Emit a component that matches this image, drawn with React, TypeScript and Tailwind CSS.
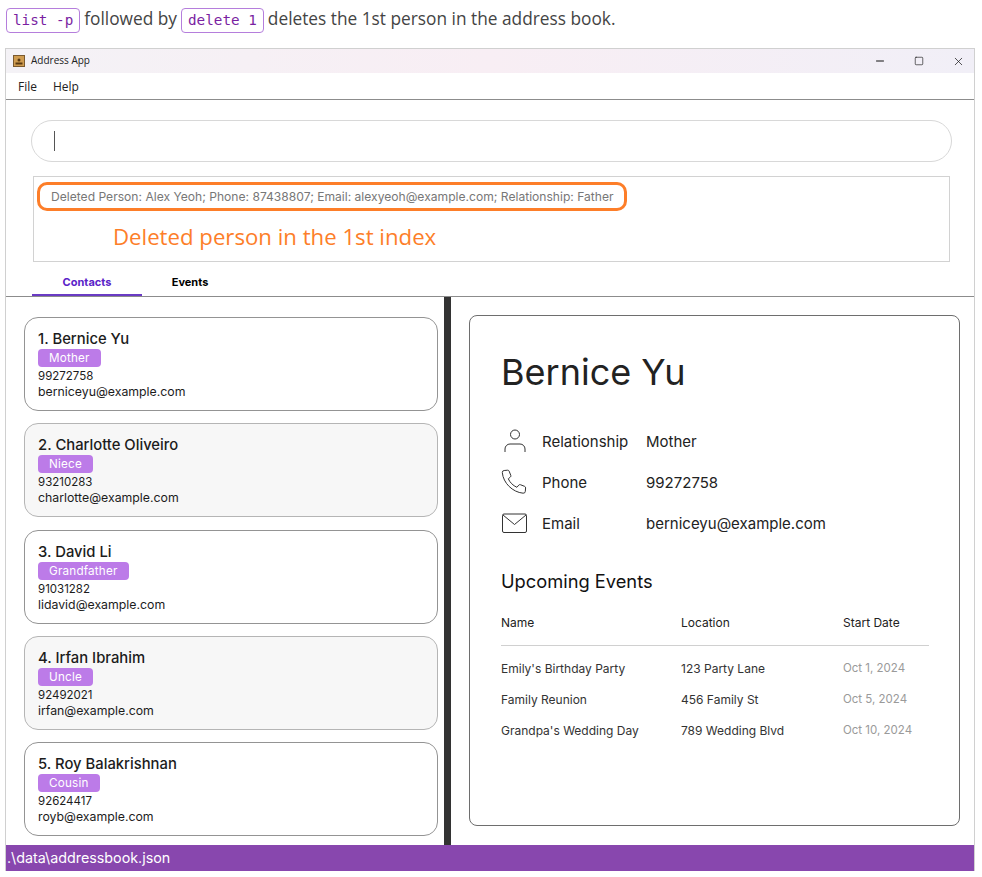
import React from 'react'
import { Minus, Square, X } from 'lucide-react'

const sans = 'font-["Inter",sans-serif]'

const people = [
  { id: 1, name: 'Bernice Yu', tag: 'Mother', phone: '99272758', email: 'berniceyu@example.com' },
  { id: 2, name: 'Charlotte Oliveiro', tag: 'Niece', phone: '93210283', email: 'charlotte@example.com' },
  { id: 3, name: 'David Li', tag: 'Grandfather', phone: '91031282', email: 'lidavid@example.com' },
  { id: 4, name: 'Irfan Ibrahim', tag: 'Uncle', phone: '92492021', email: 'irfan@example.com' },
  { id: 5, name: 'Roy Balakrishnan', tag: 'Cousin', phone: '92624417', email: 'royb@example.com' },
]

const events = [
  { name: "Emily's Birthday Party", place: '123 Party Lane', date: 'Oct 1, 2024' },
  { name: 'Family Reunion', place: '456 Family St', date: 'Oct 5, 2024' },
  { name: "Grandpa's Wedding Day", place: '789 Wedding Blvd', date: 'Oct 10, 2024' },
]

function Code({ children }: { children: React.ReactNode }) {
  return (
    <code className='h-[25px] px-[6px] rounded-[4px] border border-[#b57edc] text-[#7a1fa2] font-["DejaVu_Sans_Mono",monospace] text-[14.300px] leading-[23px]'>
      {children}
    </code>
  )
}

function PersonCard({ p }: { p: (typeof people)[number] }) {
  const even = p.id % 2 === 0
  return (
    <div
      className={`h-[94px] shrink-0 rounded-[14px] border pl-[13px] pt-[12px] ${
        even ? 'bg-[#f7f7f7] border-[#b5b5b5]' : 'bg-white border-[#949494]'
      }`}
    >
      <div className="text-[14.800px] leading-[18px] font-medium text-[#1c1c1c]">
        {p.id}. {p.name}
      </div>
      <div className="mt-[1px] flex">
        <span className="h-[18px] px-[11px] rounded-[4px] bg-[#bc7be8] text-white text-[11.700px] leading-[18px] tracking-[0.2px]">
          {p.tag}
        </span>
      </div>
      <div className="mt-[1px] text-[11.500px] leading-[17px] text-[#1c1c1c]">{p.phone}</div>
      <div className="-mt-[1px] text-[12.300px] leading-[16px] text-[#1c1c1c]">{p.email}</div>
    </div>
  )
}

function PersonIcon() {
  return (
    <svg width="26" height="26" viewBox="0 0 26 26" fill="none" stroke="#333" strokeWidth="1">
      <circle cx="14" cy="6.500" r="4.500" />
      <path d="M4 24v-3a5 5 0 0 1 5-5h10a5 5 0 0 1 5 5v3" />
    </svg>
  )
}

function PhoneIcon() {
  return (
    <svg width="26" height="26" viewBox="0 0 26 26" fill="none" stroke="#333" strokeWidth="1">
      <path d="M3.200 1.500 6.600 1.200a1.500 1.500 0 0 1 1.500.9l1.700 4.300a1.500 1.500 0 0 1-.4 1.600L7.300 9.800c1.600 3.600 4.600 6.700 8.600 8.500l1.900-2.200a1.500 1.500 0 0 1 1.600-.4l4.300 1.700a1.500 1.500 0 0 1 .9 1.500l-.3 3.500a2 2 0 0 1-2.200 1.800C11.600 23.200 2.200 14 1.300 3.600a2 2 0 0 1 1.900-2.100Z" />
    </svg>
  )
}

function MailIcon() {
  return (
    <svg width="26" height="20" viewBox="0 0 26 20" fill="none" stroke="#333" strokeWidth="1">
      <rect x="1.500" y="1" width="24" height="18.500" rx="1.500" />
      <path d="m2 2 11.500 9.500L25 2" />
    </svg>
  )
}

export default function App() {
  return (
    <div className={`${sans} w-[982px] h-[877px] bg-white overflow-hidden flex flex-col`}>
      <div className='h-[48px] pl-[6px] pt-[8px] flex items-start gap-[4px] font-["Open_Sans",sans-serif] text-[17.300px] leading-[22px] text-[#444]'>
        <Code>list -p</Code>
        <span>followed by</span>
        <Code>delete 1</Code>
        <span>deletes the 1st person in the address book.</span>
      </div>

      <div className="ml-[5px] w-[970px] h-[823px] border-t border-x border-[#d0d0d0] flex flex-col">
        <div className="h-[24px] shrink-0 flex items-center pl-[7px] bg-gradient-to-r from-[#f4f2f6] via-[#f8eef4] to-[#f1eff7]">
          <svg width="12" height="12" viewBox="0 0 12 12">
            <rect width="12" height="12" fill="#7a5a30" />
            <rect x="1" y="1" width="10" height="10" fill="#cf9c50" />
            <circle cx="6" cy="5" r="1.500" fill="#5a3a12" />
            <rect x="2.500" y="7.500" width="7" height="2" fill="#5a3a12" />
          </svg>
          <span className='ml-[6px] -mt-[2px] font-["Open_Sans",sans-serif] text-[10px] text-[#222]'>Address App</span>
          <div className="ml-auto flex items-center text-[#111]">
            <Minus size={12} strokeWidth={2} className="mr-[28px]" />
            <Square size={10} strokeWidth={1.500} className="mr-[28px]" />
            <X size={13} strokeWidth={1.300} className="mr-[9px]" />
          </div>
        </div>

        <div className='h-[27px] shrink-0 flex items-center gap-[16px] pl-[12px] pt-[2px] border-b border-[#8c8c8c] font-["Open_Sans",sans-serif] text-[12px] text-[#222]'>
          <span>File</span>
          <span>Help</span>
        </div>

        <div className="h-[197px] shrink-0 pt-[20px] px-[25px] relative border-b border-[#8c8c8c]">
          <div className="h-[42px] w-[921px] rounded-[21px] border border-[#d8d8d8] flex items-center pl-[22px]">
            <div className="w-[1px] h-[20px] bg-[#555]" />
          </div>
          <div className="relative mt-[14px] ml-[2px] w-[917px] h-[86px] border border-[#d2d2d2]">
            <div className="absolute left-[3px] top-[5px] w-[590px] h-[29px] rounded-[10px] border-[3px] border-[#fd7e29]" />
            <div className="pl-[17px] pt-[12px] text-[12.100px] leading-[16px] text-[#777]">
              Deleted Person: Alex Yeoh; Phone: 87438807; Email: alexyeoh@example.com; Relationship: Father
            </div>
            <div className='pl-[79px] pt-[17px] font-["Open_Sans",sans-serif] text-[22.200px] leading-[30px] text-[#fd7e29]'>
              Deleted person in the 1st index
            </div>
          </div>
          <div className="absolute left-[26px] bottom-0 flex text-[11px] font-bold">
            <div className="w-[110px] h-[33px] pt-[8px] flex items-center justify-center text-[#5a22c8] border-b-2 border-[#6a3bc4]">
              Contacts
            </div>
            <div className="w-[96px] h-[33px] pt-[6px] flex items-center justify-center text-black">Events</div>
          </div>
        </div>

        <div className="flex-1 min-h-0 flex">
          <div className="w-[438px] shrink-0 pt-[20px] pl-[18px] pr-[6px] flex flex-col gap-[12.250px] overflow-hidden">
            {people.map((p) => (
              <PersonCard key={p.id} p={p} />
            ))}
          </div>
          <div className="w-[7px] shrink-0 bg-[#333]" />
          <div className="flex-1 pt-[18px] pl-[18px] pr-[14px]">
            <div className="h-[511px] rounded-[8px] border border-[#6e6e6e] pl-[31px] pr-[30px] pt-[32px]">
              <h1 className="text-[36px] leading-[48px] text-[#222]">Bernice Yu</h1>
              <div className="mt-[32px] flex flex-col gap-[15px] text-[15px] text-[#222]">
                {[
                  { icon: <PersonIcon />, label: 'Relationship', value: 'Mother' },
                  { icon: <PhoneIcon />, label: 'Phone', value: '99272758' },
                  { icon: <MailIcon />, label: 'Email', value: 'berniceyu@example.com' },
                ].map((row) => (
                  <div key={row.label} className="h-[26px] flex items-center">
                    <div className="w-[41px] shrink-0">{row.icon}</div>
                    <div className="w-[104px] shrink-0 pt-[2px]">{row.label}</div>
                    <div className="pt-[2px]">{row.value}</div>
                  </div>
                ))}
              </div>
              <h2 className="mt-[32px] text-[18.300px] leading-[26px] text-[#111]">Upcoming Events</h2>
              <div className="mt-[20px] text-[12px]">
                <div className="grid grid-cols-[180px_162px_1fr] h-[32px] border-b border-[#d0d0d0] text-[#222]">
                  <div>Name</div>
                  <div>Location</div>
                  <div>Start Date</div>
                </div>
                <div className="mt-[7px] flex flex-col">
                  {events.map((e) => (
                    <div key={e.name} className="grid grid-cols-[180px_162px_1fr] h-[31px] items-center text-[#333]">
                      <div>{e.name}</div>
                      <div>{e.place}</div>
                      <div className="text-[11.500px] text-[#9a9a9a]">{e.date}</div>
                    </div>
                  ))}
                </div>
              </div>
            </div>
          </div>
        </div>

        <div className="h-[26px] shrink-0 bg-[#8847ae] pl-[1px] text-white text-[14.300px] leading-[26px]">
          .\data\addressbook.json
        </div>
      </div>
    </div>
  )
}
